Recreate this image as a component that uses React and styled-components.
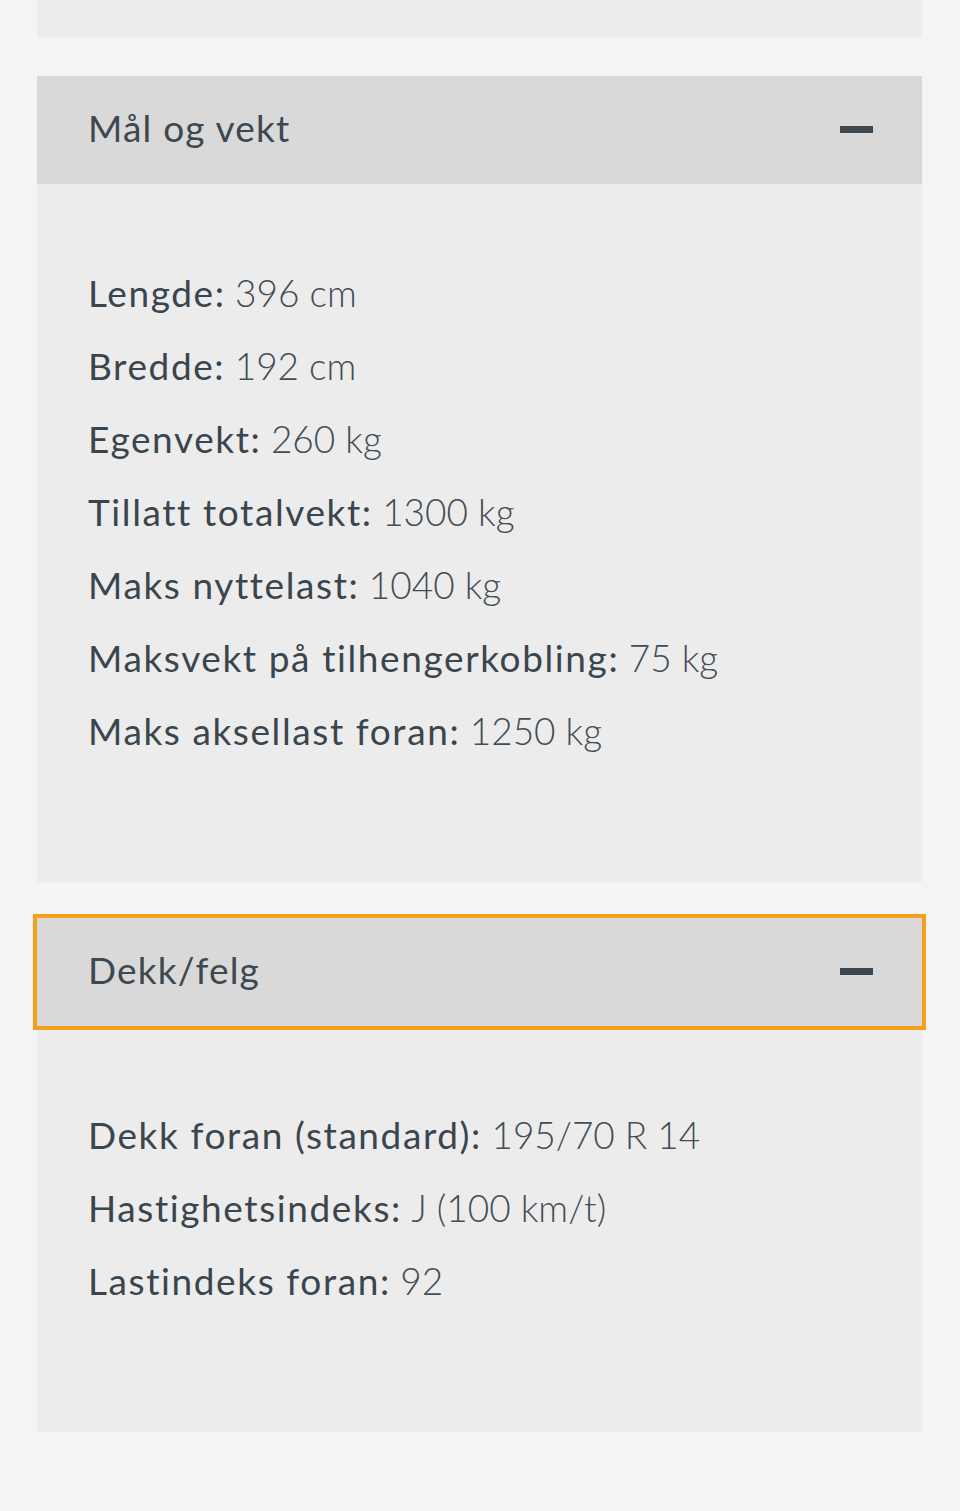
import React from "react"
import styled, { createGlobalStyle } from "styled-components"

const GlobalStyle = createGlobalStyle`
  html, body {
    margin: 0;
    padding: 0;
    background: #f4f4f4;
  }
  body {
    font-family: Lato, "Noto Sans", sans-serif;
    color: #3d4850;
  }
`

const sections = [
  {
    title: "Mål og vekt",
    specs: [
      ["Lengde", "396 cm"],
      ["Bredde", "192 cm"],
      ["Egenvekt", "260 kg"],
      ["Tillatt totalvekt", "1300 kg"],
      ["Maks nyttelast", "1040 kg"],
      ["Maksvekt på tilhengerkobling", "75 kg"],
      ["Maks aksellast foran", "1250 kg"],
    ],
  },
  {
    title: "Dekk/felg",
    focused: true,
    specs: [
      ["Dekk foran (standard)", "195/70 R 14"],
      ["Hastighetsindeks", "J (100 km/t)"],
      ["Lastindeks foran", "92"],
    ],
  },
]

const Page = styled.div`
  padding: 0 38px 79px 37px;
`

const PrevTail = styled.div`
  height: 38px;
  background: #ececec;
  margin-bottom: 38px;
`

const Card = styled.section`
  margin-bottom: 36px;
  &:last-child {
    margin-bottom: 0;
  }
`

const Header = styled.button`
  display: flex;
  align-items: center;
  justify-content: space-between;
  width: 100%;
  height: 108px;
  padding: 0 49px 0 51px;
  border: 0;
  background: #d9d9d9;
  font-family: inherit;
  font-size: 37px;
  color: #3d4850;
  cursor: pointer;
  outline: ${p => (p.$focused ? "4px solid #f5a01c" : "none")};
  outline-offset: 0;
  box-sizing: border-box;
`

const Title = styled.span`
  letter-spacing: 1.2px;
  margin-top: -6px;
`

const Minus = styled.span`
  display: block;
  width: 33px;
  height: 7px;
  margin-top: -2px;
  background: #3d4850;
`

const Body = styled.div`
  background: #ececec;
  padding: ${p => (p.$short ? "72px 51px 115px" : "72px 51px 115px")};
`

const List = styled.ul`
  list-style: none;
  margin: 0;
  padding: 0;
`

const Row = styled.li`
  height: 73px;
  line-height: 73px;
  font-size: 37px;
  white-space: nowrap;
`

const Label = styled.span`
  font-weight: 400;
  letter-spacing: 1.6px;
  color: #3a454d;
`

const Value = styled.span`
  font-weight: 300;
  color: #434d55;
`

export default function App() {
  return (
    <>
      <GlobalStyle />
      <Page>
        <PrevTail />
        {sections.map(s => (
          <Card key={s.title}>
            <Header $focused={s.focused}>
              <Title>{s.title}</Title>
              <Minus />
            </Header>
            <Body $short={s.focused}>
              <List>
                {s.specs.map(([k, v]) => (
                  <Row key={k}>
                    <Label>{k}:</Label> <Value>{v}</Value>
                  </Row>
                ))}
              </List>
            </Body>
          </Card>
        ))}
      </Page>
    </>
  )
}
